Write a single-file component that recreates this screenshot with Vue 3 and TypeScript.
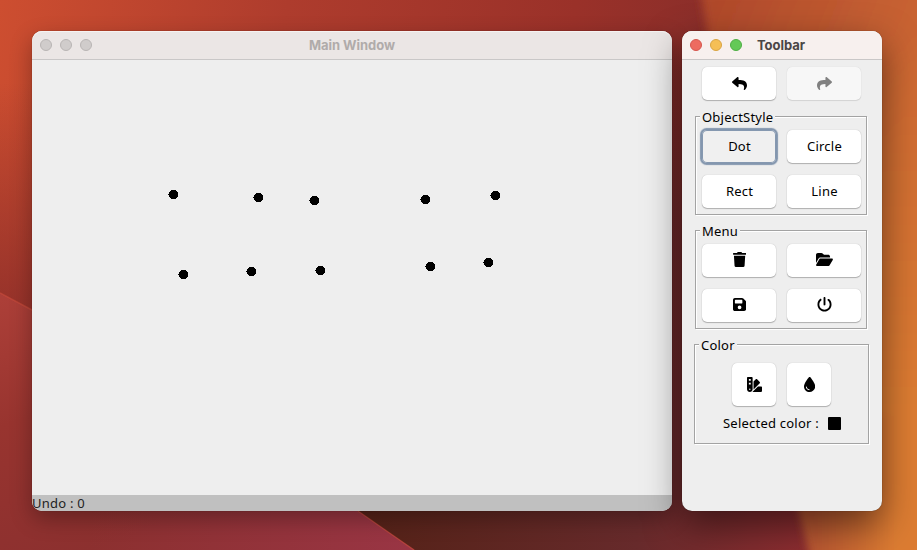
<script setup lang="ts">
interface Point { x: number; y: number }
interface Icon { w: number; d: string }
type IconName = 'undo' | 'trash' | 'folder' | 'save' | 'power' | 'swatch' | 'droplet'

const dots: Point[] = [
  { x: 141.5, y: 134.5 }, { x: 226.5, y: 137.5 }, { x: 282.5, y: 140.5 },
  { x: 393.5, y: 139.5 }, { x: 463.5, y: 135.5 }, { x: 151.5, y: 214.5 },
  { x: 219.5, y: 211.5 }, { x: 288.5, y: 210.5 }, { x: 398.5, y: 206.5 },
  { x: 456.5, y: 202.5 },
]

const shapes: string[] = ['Dot', 'Circle', 'Rect', 'Line']
const selectedShape = 'Dot'
const menu: IconName[] = ['trash', 'folder', 'save', 'power']
const colorTools: IconName[] = ['swatch', 'droplet']

const icons: Record<IconName, Icon> = {
  undo: { w: 512, d: 'M8.309 189.836L184.313 37.851C199.719 24.546 224 35.347 224 56.015v80.053c160.629 1.839 288 34.032 288 186.258 0 61.441-39.581 122.309-83.333 154.132-13.653 9.931-33.111-2.533-28.077-18.631 45.344-145.012-21.507-183.51-176.59-185.742V360c0 20.7-24.3 31.453-39.687 18.164l-176.004-152c-11.071-9.562-11.086-26.753 0-36.328z' },
  trash: { w: 448, d: 'M432 32H312l-9.4-18.7A24 24 0 0 0 281.1 0H166.8a23.72 23.72 0 0 0-21.4 13.3L136 32H16A16 16 0 0 0 0 48v32a16 16 0 0 0 16 16h416a16 16 0 0 0 16-16V48a16 16 0 0 0-16-16zM53.2 467a48 48 0 0 0 47.9 45h245.8a48 48 0 0 0 47.9-45L416 128H32z' },
  folder: { w: 576, d: 'M88.7 223.8L0 375.8V96C0 60.7 28.7 32 64 32H181.5c17 0 33.3 6.7 45.3 18.7l26.5 26.5c12 12 28.3 18.7 45.3 18.7H416c35.3 0 64 28.7 64 64v32H144c-22.8 0-43.8 12.1-55.3 31.8zm27.6 16.1C122.1 230 132.6 224 144 224H544c11.5 0 22 6.1 27.7 16.1s5.7 22.2-.1 32.1l-112 192C453.9 474 443.4 480 432 480H32c-11.5 0-22-6.1-27.7-16.1s-5.7-22.2 .1-32.1l112-192z' },
  save: { w: 448, d: 'M64 32C28.7 32 0 60.7 0 96V416c0 35.3 28.7 64 64 64H384c35.3 0 64-28.7 64-64V173.3c0-17-6.7-33.3-18.7-45.3L352 50.7C340 38.7 323.7 32 306.7 32H64zm0 96c0-17.7 14.3-32 32-32H288c17.7 0 32 14.3 32 32v64c0 17.7-14.3 32-32 32H96c-17.7 0-32-14.3-32-32V128zM224 288a64 64 0 1 1 0 128 64 64 0 1 1 0-128z' },
  power: { w: 512, d: 'M288 32c0-17.7-14.3-32-32-32s-32 14.3-32 32V256c0 17.7 14.3 32 32 32s32-14.3 32-32V32zM143.5 120.6c13.6-11.3 15.4-31.5 4.1-45.1s-31.5-15.4-45.1-4.1C49.7 115.4 16 181.8 16 256c0 132.5 107.5 240 240 240s240-107.5 240-240c0-74.2-33.8-140.6-86.6-184.6c-13.6-11.3-33.8-9.4-45.1 4.1s-9.4 33.8 4.1 45.1c38.9 32.3 63.5 81 63.5 135.4c0 97.2-78.8 176-176 176s-176-78.8-176-176c0-54.4 24.7-103.1 63.5-135.4z' },
  swatch: { w: 512, d: 'M0 32C0 14.3 14.3 0 32 0H160c17.7 0 32 14.3 32 32V416c0 53-43 96-96 96s-96-43-96-96V32zM223.6 425.9c.3-3.3 .4-6.6 .4-9.9V154l75.4-75.4c12.5-12.5 32.8-12.5 45.3 0l90.5 90.5c12.5 12.5 12.5 32.8 0 45.3L223.6 425.9zM182.8 512l192-192H480c17.7 0 32 14.3 32 32V480c0 17.7-14.3 32-32 32H182.8zM128 64H64v64h64V64zM64 192v64h64V192H64zM96 440a24 24 0 1 0 0-48 24 24 0 1 0 0 48z' },
  droplet: { w: 384, d: 'M192 512C86 512 0 426 0 320C0 228.8 130.2 57.7 166.6 11.7C172.6 4.2 181.5 0 191.1 0h1.8c9.6 0 18.5 4.2 24.5 11.7C253.8 57.7 384 228.8 384 320c0 106-86 192-192 192zM96 336c0-8.8-7.2-16-16-16s-16 7.2-16 16c0 61.9 50.1 112 112 112c8.8 0 16-7.2 16-16s-7.2-16-16-16c-44.2 0-80-35.8-80-80z' },
}
</script>

<template>
  <div class="desktop">
    <svg class="wallpaper" viewBox="0 0 917 550" aria-hidden="true">
      <defs>
        <linearGradient id="base" gradientUnits="userSpaceOnUse" x1="0" y1="0" x2="700" y2="120">
          <stop offset="0" stop-color="#cd4e30" />
          <stop offset="0.4" stop-color="#ae3c2d" />
          <stop offset="0.8" stop-color="#9a3129" />
          <stop offset="1" stop-color="#8a2e2a" />
        </linearGradient>
        <linearGradient id="fade" x1="0" y1="0" x2="0" y2="1">
          <stop offset="0.15" stop-color="#8c2d29" stop-opacity="0" />
          <stop offset="0.6" stop-color="#8c2d29" stop-opacity="0.9" />
        </linearGradient>
        <linearGradient id="petal" gradientUnits="userSpaceOnUse" x1="0" y1="300" x2="90" y2="550">
          <stop offset="0" stop-color="#ac3f38" />
          <stop offset="0.45" stop-color="#98342f" />
          <stop offset="1" stop-color="#8c302f" />
        </linearGradient>
        <linearGradient id="petalEnd" gradientUnits="userSpaceOnUse" x1="90" y1="0" x2="410" y2="0">
          <stop offset="0" stop-color="#993544" stop-opacity="0" />
          <stop offset="1" stop-color="#993544" />
        </linearGradient>
        <linearGradient id="shade" gradientUnits="userSpaceOnUse" x1="370" y1="0" x2="815" y2="0">
          <stop offset="0" stop-color="#552218" />
          <stop offset="0.6" stop-color="#672a2b" />
          <stop offset="1" stop-color="#8f2d31" />
        </linearGradient>
        <linearGradient id="gap" x1="0" y1="0" x2="0" y2="1">
          <stop offset="0" stop-color="#6b2a2c" stop-opacity="0" />
          <stop offset="0.4" stop-color="#6b2a2c" stop-opacity="0.8" />
          <stop offset="1" stop-color="#6b2a2c" />
        </linearGradient>
        <linearGradient id="orange" gradientUnits="userSpaceOnUse" x1="690" y1="0" x2="917" y2="90">
          <stop offset="0" stop-color="#ad462b" />
          <stop offset="1" stop-color="#cc6733" />
        </linearGradient>
        <linearGradient id="orangeLow" x1="0" y1="0" x2="0" y2="1">
          <stop offset="0.1" stop-color="#dc7c32" stop-opacity="0" />
          <stop offset="0.7" stop-color="#dc7c32" />
        </linearGradient>
        <linearGradient id="orangeEdge" gradientUnits="userSpaceOnUse" x1="805" y1="0" x2="895" y2="0">
          <stop offset="0" stop-color="#b55330" />
          <stop offset="1" stop-color="#b55330" stop-opacity="0" />
        </linearGradient>
        <filter id="soft" x="-20%" y="-20%" width="140%" height="140%"><feGaussianBlur stdDeviation="4" /></filter>
      </defs>
      <rect width="917" height="550" fill="url(#base)" />
      <rect width="917" height="550" fill="url(#fade)" />
      <rect x="665" y="40" width="30" height="465" fill="url(#gap)" />
      <path d="M340 500L430 560H840V500Z" fill="url(#shade)" />
      <path d="M0 293L32 310L358 511L414 550H0Z" fill="url(#petal)" />
      <path d="M0 293L32 310L358 511L414 550H0Z" fill="url(#petalEnd)" />
      <path d="M0 293L32 310M358 511L414 550" fill="none" stroke="#d2503d" stroke-width="1.5" opacity="0.5" />
      <g filter="url(#soft)">
        <path d="M697 -30Q750 300 821 600H950V-30Z" fill="url(#orange)" />
        <path d="M697 -30Q750 300 821 600H950V-30Z" fill="url(#orangeLow)" />
        <path d="M788 440L821 600H950V400Z" fill="url(#orangeEdge)" />
      </g>
    </svg>

    <section class="window main-window">
      <header class="titlebar">
        <div class="lights"><i class="light" /><i class="light" /><i class="light" /></div>
        <h1 class="title">Main Window</h1>
      </header>
      <svg class="canvas" width="640" height="435" shape-rendering="crispEdges">
        <g v-for="(dot, i) in dots" :key="i">
          <circle :cx="dot.x" :cy="dot.y" r="4.6" />
          <rect :x="dot.x - 5.5" :y="dot.y - 0.5" width="1" height="1" />
        </g>
      </svg>
      <footer class="status">Undo : 0</footer>
    </section>

    <section class="window toolbar">
      <header class="titlebar">
        <div class="lights"><i class="light close" /><i class="light minimize" /><i class="light zoom" /></div>
        <h1 class="title">Toolbar</h1>
      </header>
      <div class="history">
        <button class="btn"><svg class="icon" viewBox="0 0 512 512" width="15" height="15"><path :d="icons.undo.d" /></svg></button>
        <button class="btn disabled" disabled><svg class="icon flip" viewBox="0 0 512 512" width="15" height="15"><path :d="icons.undo.d" /></svg></button>
      </div>
      <div class="group">
        <span class="legend">ObjectStyle</span>
        <div class="grid">
          <button v-for="shape in shapes" :key="shape" class="btn raised" :class="{ focused: shape === selectedShape }">{{ shape }}</button>
        </div>
      </div>
      <div class="group">
        <span class="legend">Menu</span>
        <div class="grid">
          <button v-for="name in menu" :key="name" class="btn raised">
            <svg class="icon" :viewBox="`0 0 ${icons[name].w} 512`" :width="icons[name].w * 15 / 512" height="15"><path :d="icons[name].d" /></svg>
          </button>
        </div>
      </div>
      <div class="group color">
        <span class="legend">Color</span>
        <div class="color-tools">
          <button v-for="name in colorTools" :key="name" class="btn square">
            <svg class="icon" :viewBox="`0 0 ${icons[name].w} 512`" :width="icons[name].w * 15 / 512" height="15"><path :d="icons[name].d" /></svg>
          </button>
        </div>
        <div class="selected"><span>Selected color :</span><i class="swatch" /></div>
      </div>
    </section>
  </div>
</template>

<style>
body { margin: 0; overflow: hidden; }
</style>

<style scoped>
.desktop {
  position: relative;
  box-sizing: border-box;
  width: 917px;
  height: 550px;
  padding: 31px 32px 39px;
  display: flex;
  gap: 10px;
  overflow: hidden;
  font: 13px/16px "Noto Sans", "Open Sans", sans-serif;
  letter-spacing: 0.22px;
  color: #000;
}
.wallpaper { position: absolute; inset: 0; width: 917px; height: 550px; }
.window {
  position: relative;
  display: flex;
  flex-direction: column;
  height: 480px;
  border-radius: 10px;
  background: #eee;
}
.main-window {
  width: 640px;
  box-shadow: 0 0 1px rgba(0, 0, 0, 0.5), 0 8px 22px rgba(0, 0, 0, 0.3);
}
.toolbar {
  width: 200px;
  box-shadow: 0 0 1px rgba(0, 0, 0, 0.6), 0 14px 36px rgba(0, 0, 0, 0.5);
}
.titlebar {
  position: relative;
  box-sizing: border-box;
  height: 29px;
  flex: none;
  display: flex;
  align-items: center;
  padding-left: 8px;
  border-bottom: 1px solid #c9c7c7;
  border-radius: 10px 10px 0 0;
  background: #ebe6e5;
  box-shadow: inset 0 1px #f6f3f2;
}
.toolbar .titlebar { background: #f7f0ee; }
.lights { display: flex; gap: 8px; }
.light {
  box-sizing: border-box;
  width: 12px;
  height: 12px;
  border: 1px solid #b9b5b4;
  border-radius: 50%;
  background: #d0cccb;
}
.close { background: #ed6b60; border-color: #d6564d; }
.minimize { background: #f5bf56; border-color: #d9a442; }
.zoom { background: #64c957; border-color: #4eae43; }
.title {
  margin: 0;
  font: 700 13px/16px Inter, sans-serif;
  letter-spacing: -0.05px;
  color: #b0abaa;
}
.main-window .title { flex: 1; text-align: center; margin-right: 60px; }
.toolbar .title { margin-left: 15px; color: #4b4645; }
.canvas { display: block; flex: none; }
.status {
  height: 16px;
  border-radius: 0 0 10px 10px;
  background: #c0c0c0;
  color: #222;
  overflow: hidden;
}
.history { display: flex; gap: 11px; padding: 7px 0 0 20px; }
.btn {
  box-sizing: border-box;
  display: flex;
  align-items: center;
  justify-content: center;
  width: 74px;
  height: 33px;
  padding: 0 0 0 1px;
  border: 0;
  border-radius: 5px;
  background: #fff;
  box-shadow: 0 0 1px rgba(0, 0, 0, 0.25), 0 1px 1px rgba(0, 0, 0, 0.25);
  font: inherit;
  letter-spacing: inherit;
  color: #000;
}
.raised { padding-bottom: 2px; }
.disabled { background: #f7f7f7; color: #808080; box-shadow: 0 0 1px rgba(0, 0, 0, 0.15), 0 1px 1px rgba(0, 0, 0, 0.1); }
.focused { background: #f0f0f0; box-shadow: inset 0 0 0 1px #8598b0, 0 0 0 1px #8396ae, 0 0 1px 1.5px #8396ae; }
.icon { display: block; fill: currentColor; }
.flip { transform: scaleX(-1); }
.group {
  position: relative;
  box-sizing: border-box;
  width: 172px;
  height: 99px;
  margin: 16px 0 0 13px;
  padding: 13px 0 0 6px;
  border: 1px solid #a3a3a3;
  box-shadow: inset 1px 1px #fff, 1px 1px #fff;
}
.group + .group { margin-top: 15px; }
.group.color { width: 175px; height: 100px; margin-left: 12px; padding: 18px 0 0; }
.legend {
  position: absolute;
  top: -8px;
  left: 4px;
  padding: 0 2px;
  background: #eee;
}
.grid { display: grid; grid-template-columns: 74px 74px; gap: 12px 11px; }
.color-tools { display: flex; gap: 11px; padding-left: 37px; }
.square { width: 44px; height: 43px; }
.selected { display: flex; align-items: center; gap: 9px; margin: 9px 0 0 28px; white-space: nowrap; }
.swatch { width: 13px; height: 13px; border-radius: 1px; background: #000; }
</style>
